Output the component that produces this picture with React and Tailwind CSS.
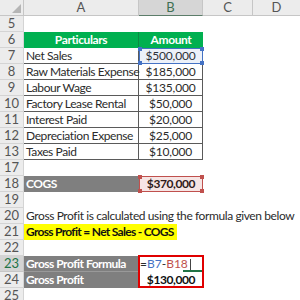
import React from 'react';

const font = { fontFamily: 'Lato, "Liberation Sans", sans-serif' };

function Row({ n, active, children }) {
  return (
    <div className="flex h-[16px]">
      <div
        className={
          active
            ? 'w-[24px] shrink-0 border-r border-b border-[#c6c6c6] bg-[#d4d4d4] text-[#217346] flex items-center justify-center text-[13px] tracking-normal'
            : 'w-[24px] shrink-0 border-r border-b border-[#d4d4d4] bg-[#ececec] text-[#555] flex items-center justify-center text-[13px] tracking-normal'
        }
      >
        {n}
      </div>
      {children}
    </div>
  );
}

const A = ({ className = '', children }) => (
  <div className={`w-[115px] shrink-0 h-[16px] leading-[16px] whitespace-nowrap ${className}`}>{children}</div>
);
const B = ({ className = '', children }) => (
  <div className={`w-[64px] shrink-0 h-[16px] leading-[16px] whitespace-nowrap ${className}`}>{children}</div>
);

const Handles = ({ color }) => (
  <>
    <span className={`absolute -left-[2px] -top-[2px] w-[4px] h-[4px] ${color}`} />
    <span className={`absolute -right-[2px] -top-[2px] w-[4px] h-[4px] ${color}`} />
    <span className={`absolute -left-[2px] -bottom-[2px] w-[4px] h-[4px] ${color}`} />
    <span className={`absolute -right-[2px] -bottom-[2px] w-[4px] h-[4px] ${color}`} />
  </>
);

const table = [
  [7, 'Net Sales', '$500,000'],
  [8, 'Raw Materials Expense', '$185,000'],
  [9, 'Labour Wage', '$135,000'],
  [10, 'Factory Lease Rental', '$50,000'],
  [11, 'Interest Paid', '$20,000'],
  [12, 'Depreciation Expense', '$25,000'],
  [13, 'Taxes Paid', '$10,000'],
];

export default function App() {
  return (
    <div className="relative w-[300px] h-[300px] overflow-hidden bg-white text-[12px] tracking-[-0.4px] text-[#2b2b2b]" style={font}>
      {/* column headers */}
      <div className="flex h-[16px] bg-[#ececec] text-[#555] text-[13px] tracking-normal">
        <div className="relative w-[24px] shrink-0 border-r border-b border-[#c6c6c6]">
          <svg className="absolute right-[2px] bottom-[2px]" width="9" height="9" viewBox="0 0 9 9">
            <polygon points="9,0 9,9 0,9" fill="#b5b5b5" />
          </svg>
        </div>
        <div className="w-[115px] shrink-0 border-r border-b border-[#c6c6c6] flex items-center justify-center">A</div>
        <div className="w-[64px] shrink-0 border-r border-b border-b-[#5c7d6a] border-r-[#c6c6c6] bg-[#d6d6d6] text-[#3f6f52] flex items-center justify-center">B</div>
        <div className="w-[50px] shrink-0 border-r border-b border-[#c6c6c6] flex items-center justify-center">C</div>
        <div className="flex-1 border-b border-[#c6c6c6] flex items-center justify-center">D</div>
      </div>

      <Row n={5} />
      <Row n={6}>
        <A className="bg-[#00b050] text-white font-bold tracking-[-0.4px] text-center border-r border-[#0b8a43]">Particulars</A>
        <B className="bg-[#00b050] text-white font-bold tracking-[-0.4px] text-center">Amount</B>
      </Row>
      {table.map(([n, label, amt]) => (
        <Row key={n} n={n}>
          <A className="border-r border-b border-[#5a5a5a] pl-[2px]">{label}</A>
          <B className="border-r border-b border-[#5a5a5a] text-center tracking-[-0.2px]">{amt}</B>
        </Row>
      ))}
      <Row n={17} />
      <Row n={18}>
        <A className="bg-[#7f7f7f] text-white font-bold tracking-[-0.5px] pl-[2px]">COGS</A>
        <B className="font-bold tracking-[-0.4px] text-center text-[#111]">$370,000</B>
      </Row>
      <Row n={19} />
      <Row n={20}>
        <A className="pl-[2px] overflow-visible">Gross Profit is calculated using the formula given below</A>
      </Row>
      <Row n={21}>
        <div className="w-[153px] shrink-0 h-[16px] leading-[16px] bg-[#ffff00] font-bold tracking-[-0.7px] pl-[2px] whitespace-nowrap text-[#111]">
          Gross Profit = Net Sales - COGS
        </div>
      </Row>
      <Row n={22} />
      <Row n={23} active>
        <A className="bg-[#7f7f7f] text-white font-bold tracking-[-0.5px] pl-[2px] border-b border-[#999]">Gross Profit Formula</A>
        <B className="pl-[1px] relative tracking-normal">
          <span>=</span>
          <span className="text-[#4472c4]">B7</span>
          <span>-</span>
          <span className="text-[#c0504d]">B18</span>
          <span className="inline-block w-[1px] h-[12px] bg-[#444] align-middle ml-[2px]" />
          <span className="absolute right-0 bottom-0 w-[20px] h-[2px] bg-[#217346]" />
        </B>
      </Row>
      <Row n={24}>
        <A className="bg-[#7f7f7f] text-white font-bold tracking-[-0.5px] pl-[2px]">Gross Profit</A>
        <B className="font-bold tracking-[-0.4px] text-center text-[#111]">$130,000</B>
      </Row>
      <Row n={25} />

      {/* reference highlights */}
      <div className="absolute left-[139px] top-[48px] w-[64px] h-[16px] border border-[#4472c4] bg-[#4472c4]/10">
        <Handles color="bg-[#4472c4]" />
      </div>
      <div className="absolute left-[139px] top-[176px] w-[64px] h-[16px] border border-[#c0504d] bg-[#c0504d]/15">
        <Handles color="bg-[#c0504d]" />
      </div>
      <div className="absolute left-[138px] top-[255px] w-[66px] h-[33px] border-2 border-[#e00000]" />
    </div>
  );
}
